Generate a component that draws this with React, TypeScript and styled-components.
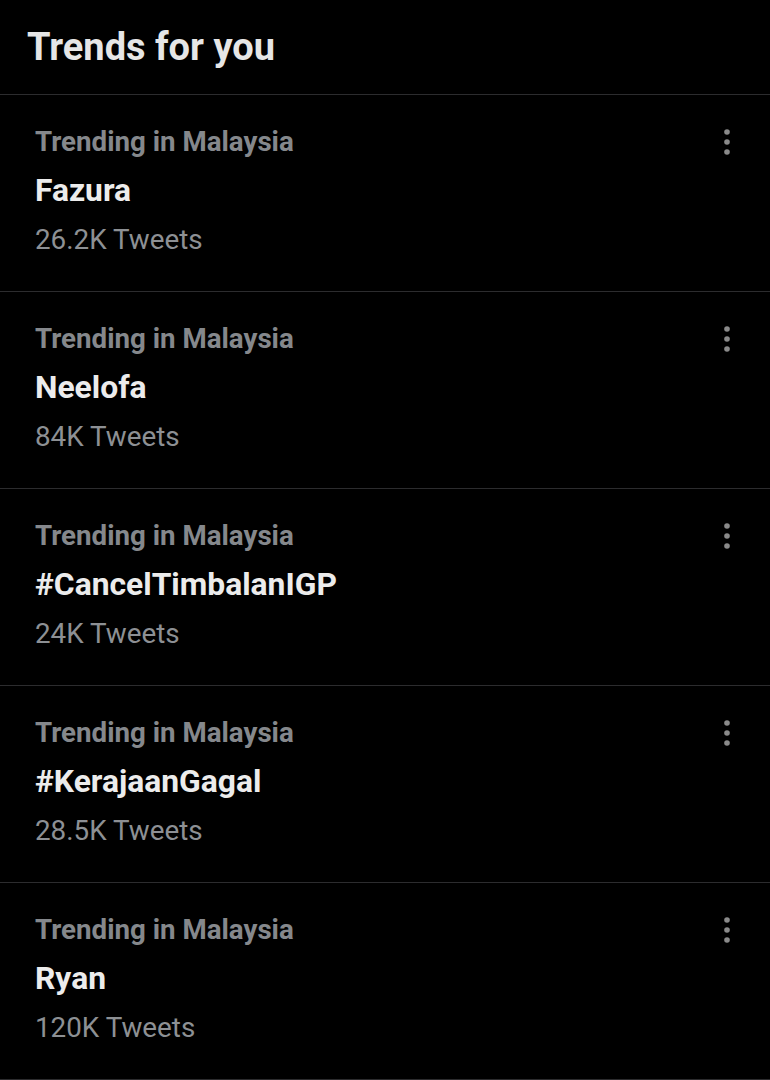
import styled, { createGlobalStyle } from 'styled-components';

const GlobalStyle = createGlobalStyle`
  * {
    box-sizing: border-box;
  }
  body {
    margin: 0;
    background: #000;
    font-family: Roboto, "Liberation Sans", sans-serif;
  }
`;

const Page = styled.div`
  width: 770px;
  min-height: 1080px;
  background: #000;
`;

const Header = styled.header`
  height: 95px;
  border-bottom: 1px solid #2c2c2e;
  padding: 28px 0 0 27px;

  h1 {
    margin: 0;
    font-size: 38px;
    line-height: 1;
    font-weight: 700;
    color: #e6e6e6;
  }
`;

const Row = styled.div`
  height: 197px;
  border-bottom: 1px solid #2c2c2e;
  display: flex;
  justify-content: space-between;
  align-items: flex-start;
  padding: 32.5px 40px 0 35px;
`;

const Info = styled.div`
  display: flex;
  flex-direction: column;
`;

const Label = styled.span`
  font-size: 27.7px;
  line-height: 1;
  font-weight: 700;
  color: #85888c;
`;

const Topic = styled.span`
  margin-top: 20px;
  font-size: 31.8px;
  line-height: 1;
  font-weight: 700;
  color: #ececec;
`;

const Count = styled.span`
  margin-top: 19px;
  font-size: 27.8px;
  line-height: 1;
  font-weight: 400;
  color: #8d9094;
`;

const MoreButton = styled.button`
  margin-top: 1.5px;
  padding: 0;
  border: 0;
  background: none;
  line-height: 0;
`;

const trends = [
  { topic: 'Fazura', count: '26.2K Tweets' },
  { topic: 'Neelofa', count: '84K Tweets' },
  { topic: '#CancelTimbalanIGP', count: '24K Tweets' },
  { topic: '#KerajaanGagal', count: '28.5K Tweets' },
  { topic: 'Ryan', count: '120K Tweets' },
];

function Dots() {
  return (
    <svg width="6" height="26" viewBox="0 0 6 26">
      <circle cx="3" cy="3" r="2.8" fill="#8a8a8a" />
      <circle cx="3" cy="13" r="2.8" fill="#8a8a8a" />
      <circle cx="3" cy="23" r="2.8" fill="#8a8a8a" />
    </svg>
  );
}

export default function App() {
  return (
    <Page>
      <GlobalStyle />
      <Header>
        <h1>Trends for you</h1>
      </Header>
      {trends.map((t) => (
        <Row key={t.topic}>
          <Info>
            <Label>Trending in Malaysia</Label>
            <Topic>{t.topic}</Topic>
            <Count>{t.count}</Count>
          </Info>
          <MoreButton aria-label="More">
            <Dots />
          </MoreButton>
        </Row>
      ))}
    </Page>
  );
}
